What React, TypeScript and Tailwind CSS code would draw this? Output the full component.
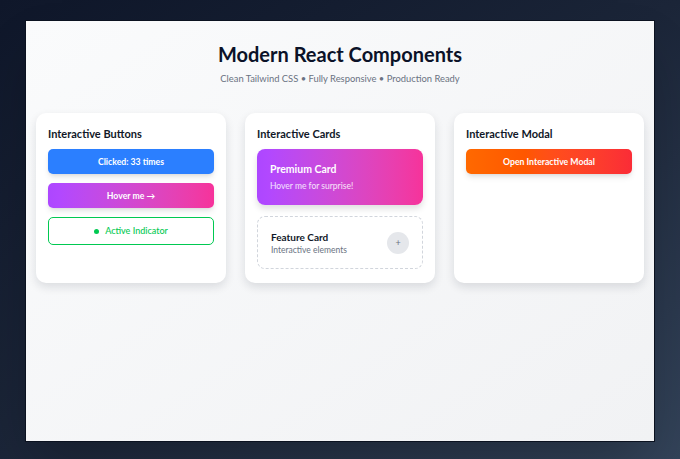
import { useState } from "react";

const font = { fontFamily: 'Lato, "Noto Sans", sans-serif' };

const Panel = ({ title, children }: { title: string; children: React.ReactNode }) => (
  <div className="h-[170px] rounded-[10px] bg-white px-3 pt-[13px] shadow-[0_4px_10px_rgba(15,23,42,0.12)]">
    <h3 className="text-[11px] font-bold leading-4 text-gray-900">{title}</h3>
    <div className="mt-[7px]">{children}</div>
  </div>
);

export default function App() {
  const [clicks, setClicks] = useState(33);

  return (
    <div
      className="flex h-screen flex-col bg-gradient-to-br from-[#0f172a] via-[#1b2538] to-[#334359] px-[25px] pt-5 pb-[17px]"
      style={font}
    >
      <div className="flex-1 border border-[#0b1220] bg-gradient-to-br from-[#fafbfc] to-[#f1f2f4] px-[10px] pt-[21px] shadow-2xl">
        <h1 className="text-center text-[20px] font-bold leading-6 text-[#0b1228]">Modern React Components</h1>
        <p className="mt-[6px] text-center text-[9.4px] leading-[14px] text-gray-500">
          Clean Tailwind CSS • Fully Responsive • Production Ready
        </p>

        <div className="mt-[27px] grid grid-cols-3 gap-[19px]">
          <Panel title="Interactive Buttons">
            <div className="flex flex-col gap-[9px]">
              <button
                onClick={() => setClicks(clicks + 1)}
                className="block h-[25px] w-full rounded-[5px] bg-blue-500 text-[8.7px] font-bold text-white shadow-md"
              >
                Clicked: {clicks} times
              </button>
              <button className="block h-[25px] w-full rounded-[5px] bg-gradient-to-r from-purple-500 to-pink-500 text-[8.7px] font-bold text-white shadow-md">
                Hover me →
              </button>
              <button className="flex h-[28px] w-full items-center justify-center gap-[6px] rounded-[5px] border-[1.5px] border-green-500 bg-white text-[9px] font-medium text-green-500">
                <span className="h-[5px] w-[5px] rounded-full bg-green-500" />
                Active Indicator
              </button>
            </div>
          </Panel>

          <Panel title="Interactive Cards">
            <div className="flex flex-col gap-[11px]">
              <div className="h-[56px] rounded-lg bg-gradient-to-r from-purple-500 to-pink-500 px-[13px] pt-[12px] text-white shadow-[0_4px_6px_rgba(0,0,0,0.12)]">
                <div className="text-[10.5px] font-bold leading-4">Premium Card</div>
                <div className="mt-[3px] text-[8.5px] leading-3 text-white/85">Hover me for surprise!</div>
              </div>
              <div className="flex h-[53px] items-center justify-between rounded-lg border border-dashed border-gray-300 px-[13px]">
                <div>
                  <div className="text-[10px] font-bold leading-[14px] text-gray-900">Feature Card</div>
                  <div className="text-[8.5px] leading-3 text-gray-500">Interactive elements</div>
                </div>
                <div className="flex h-[22px] w-[22px] items-center justify-center rounded-full bg-gray-200 text-[9px] text-gray-500">
                  +
                </div>
              </div>
            </div>
          </Panel>

          <Panel title="Interactive Modal">
            <button className="block h-[25px] w-full rounded-[5px] bg-gradient-to-r from-orange-500 to-red-500 text-[8.7px] font-bold text-white shadow-md">
              Open Interactive Modal
            </button>
          </Panel>
        </div>
      </div>
    </div>
  );
}
